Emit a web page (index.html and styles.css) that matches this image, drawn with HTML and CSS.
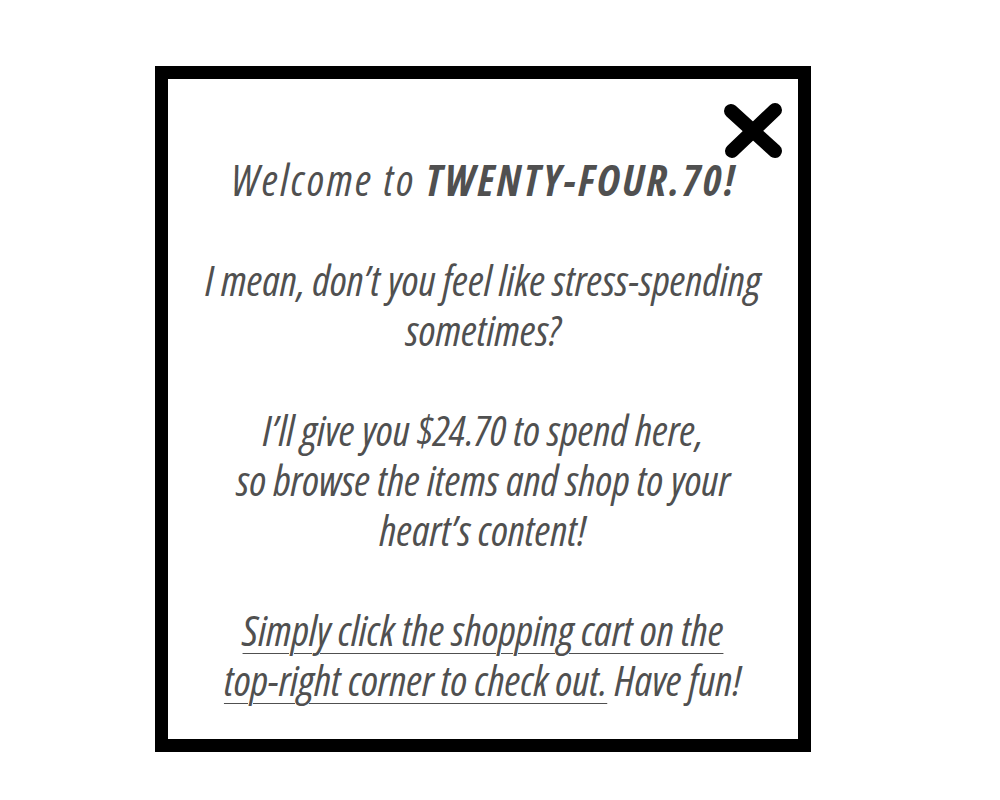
FILE: index.html
```html
<!DOCTYPE html>
<html>
<head>
<meta charset="utf-8">
<link rel="stylesheet" href="styles.css">
</head>
<body>
<div class="modal">
  <svg class="close" width="66" height="62" viewBox="0 0 66 62" aria-label="Close">
    <line x1="10" y1="11" x2="54" y2="51" />
    <line x1="54" y1="10" x2="11" y2="51" />
  </svg>
  <div class="content">
    <p class="line heading">Welcome to <b>TWENTY-FOUR.70!</b></p>
    <p class="line blank">&nbsp;</p>
    <p class="line">I mean, don’t you feel like stress-spending</p>
    <p class="line">sometimes?</p>
    <p class="line blank">&nbsp;</p>
    <p class="line">I’ll give you $24.70 to spend here,</p>
    <p class="line">so browse the items and shop to your</p>
    <p class="line">heart’s content!</p>
    <p class="line blank">&nbsp;</p>
    <p class="line"><span class="u">Simply click the shopping cart on the</span></p>
    <p class="line"><span class="u">top-right corner to check out.</span> Have fun!</p>
  </div>
</div>
</body>
</html>
```

FILE: styles.css
```css
html, body {
  margin: 0;
  padding: 0;
  background: #ffffff;
}
body {
  padding: 66px 0 0 155px;
}
.modal {
  position: relative;
  box-sizing: border-box;
  width: 656px;
  height: 686px;
  border: 13px solid #000;
  background: #fff;
}
.close {
  position: absolute;
  left: 553px;
  top: 21px;
}
.close line {
  stroke: #000;
  stroke-width: 14;
  stroke-linecap: round;
}
.content {
  padding-top: 76px;
  font-family: "Open Sans", "Noto Sans", sans-serif;
  font-style: italic;
  font-stretch: 75%;
  font-size: 42px;
  line-height: 50px;
  color: #505050;
  text-align: center;
}
.line {
  margin: 0;
  white-space: nowrap;
}
.heading {
  font-size: 43px;
  letter-spacing: 2.5px;
  padding-left: 2.5px;
}
.u {
  text-decoration: underline;
  text-decoration-thickness: 1px;
  text-underline-offset: 7px;
}
b {
  font-weight: 700;
}
```
